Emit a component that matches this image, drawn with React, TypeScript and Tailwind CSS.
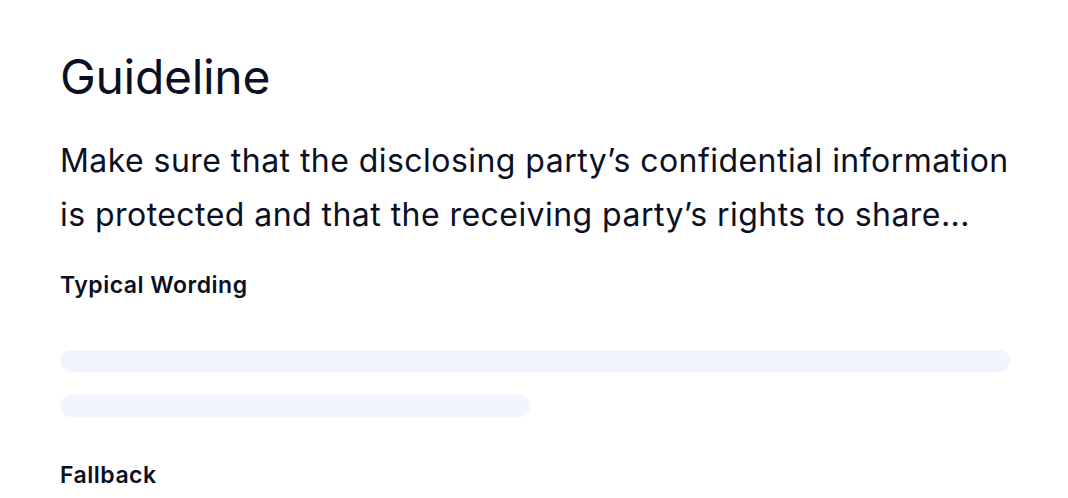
export default function App() {
  return (
    <div className="min-h-screen bg-white px-[60px] pt-[47px] font-['Inter',sans-serif] text-[#0b1024]">
      <h1 className="text-[48px] leading-[60px] font-normal tracking-[-0.3px]">Guideline</h1>
      <p className="mt-[27px] w-[975px] text-[32px] leading-[54px] tracking-[0.45px]">
        Make sure that the disclosing party’s confidential information is protected and that the receiving party’s rights to share...
      </p>
      <h2 className="mt-[27px] text-[23px] leading-[32px] font-semibold tracking-[0.5px]">Typical Wording</h2>
      <div className="mt-[49px] flex flex-col gap-[23px]">
        <div className="h-[22px] w-[950px] rounded-full bg-[#f0f5fe]" />
        <div className="h-[22px] w-[470px] rounded-full bg-[#f0f5fe]" />
      </div>
      <h2 className="mt-[42px] text-[23px] leading-[32px] font-semibold tracking-[0.5px]">Fallback</h2>
    </div>
  )
}
